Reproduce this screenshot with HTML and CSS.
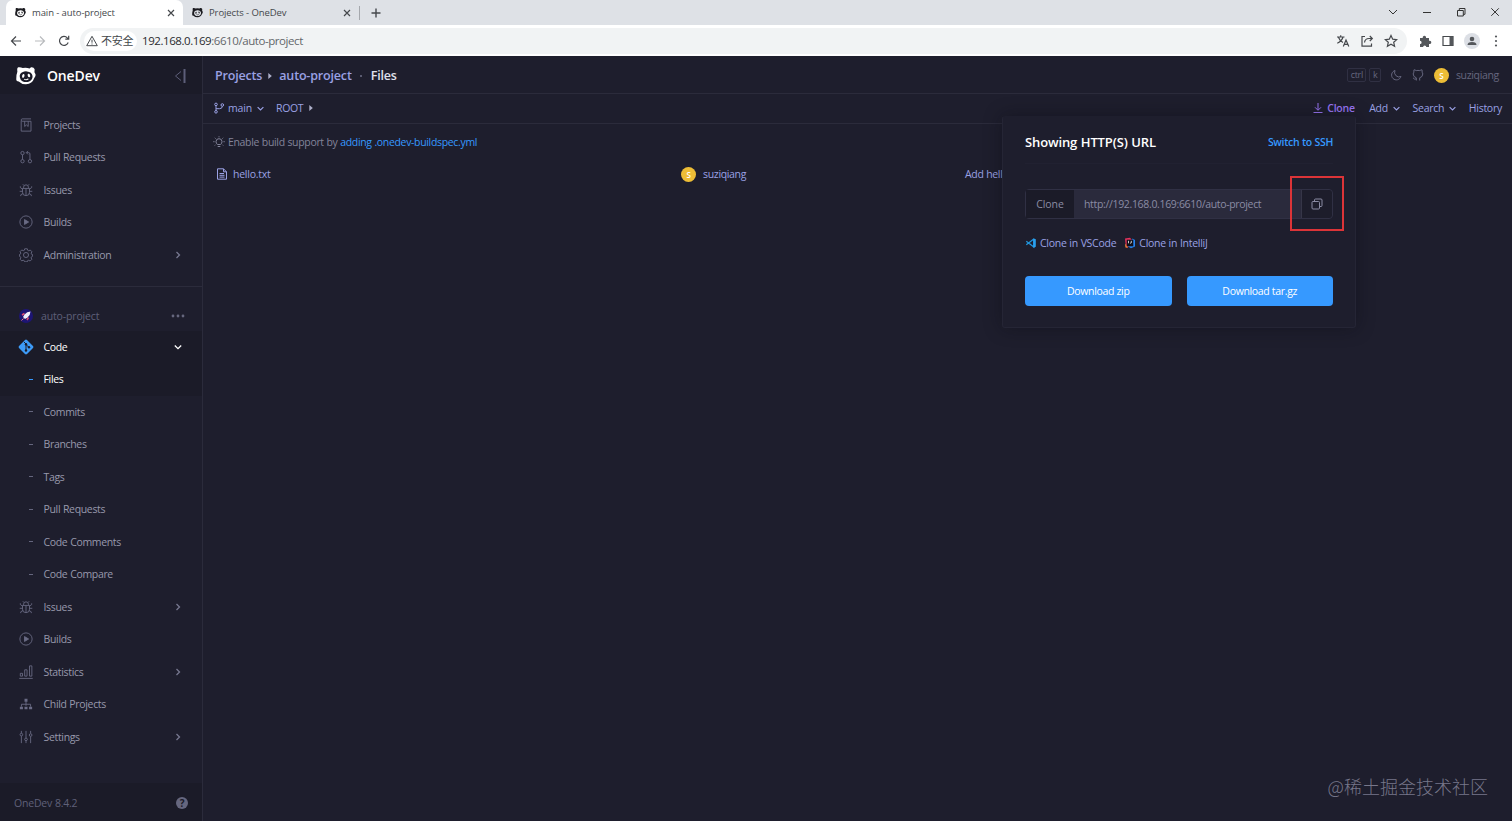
FILE: index.html
```html
<!DOCTYPE html>
<html lang="en">
<head>
  <meta charset="UTF-8">
  <title>main - auto-project</title>
  <link rel="stylesheet" href="styles.css">
</head>
<body>
  <svg class="sprite" width="0" height="0">
    <symbol id="logo" viewBox="0 0 22 20">
      <path d="M2.500 1 Q1.300 1.200 1.300 3.500 L1.500 6 Q.3 9 .3 13.500 Q0 16.500 3 16.500 Q6 19.600 11 19.500 Q18 19.200 20 13 Q22 11 21.500 8.500 L20.300 6.500 L20.500 3 Q19.500.6 16.500 1 L15 2.200 Q11 1 7.500 1.800 Q4.500.4 2.500 1Z" fill="currentColor"/>
      <path d="M4.200 12 Q3.500 8 7 6.500 Q9.500 5.200 12 5.500 Q17.500 5.800 18.200 10.500 Q18.500 14.500 14.500 16.500 Q11 17.800 7.500 16.500 Q4.500 15 4.200 12Z" class="logo-face"/>
      <ellipse cx="8" cy="10.500" rx="1.300" ry="2.100" transform="rotate(15 8 10.500)" fill="currentColor"/>
      <ellipse cx="14.200" cy="10" rx="1.300" ry="2.100" transform="rotate(-20 14.200 10)" fill="currentColor"/>
      <path d="M9 14 Q11.300 15.600 13.600 13.600" fill="none" stroke="currentColor" stroke-width="1.200"/>
    </symbol>
    <symbol id="close" viewBox="0 0 10 10"><path d="M2 2l6 6M8 2l-6 6"/></symbol>
    <symbol id="right" viewBox="0 0 10 10"><path d="M3.500 2l3 3-3 3"/></symbol>
    <symbol id="down" viewBox="0 0 10 10"><path d="M1.800 3.500L5 6.700l3.200-3.200"/></symbol>
    <symbol id="caret" viewBox="0 0 6 8"><path d="M1.300 1L4.800 4l-3.500 3z" fill="currentColor" stroke="none"/></symbol>
    <symbol id="projects" viewBox="0 0 16 16"><path d="M2.500 3.200V15h11.200V3.700H3.600C2.200 3.700 2.200 1 3.600 1h10.100M6.500 3.700v6l2-1.800 2 1.800v-6"/></symbol>
    <symbol id="pull" viewBox="0 0 16 16"><circle cx="4" cy="3.500" r="1.900"/><circle cx="4" cy="12.800" r="1.900"/><circle cx="12.500" cy="12.800" r="1.900"/><path d="M4 5.400v5.500M12.500 10.900V4.500q0-1.500-1.500-1.500H8.500M10.300 1L8.300 3l2 2"/></symbol>
    <symbol id="bug" viewBox="0 0 16 16"><path d="M4 6.200h8v4.300a4 4 0 0 1-8 0zM5.200 6V4.900a2.800 2.800 0 0 1 5.600 0V6M8 6.200v8M4 9.500H.8M12 9.500h3.200M4 7L1.500 5.200V3.800M12 7l2.500-1.800V3.800M4.500 12L2 13.500V15M11.500 12l2.500 1.500V15M5.500 2.800L4.500 1.500M10.500 2.800l1-1.300"/></symbol>
    <symbol id="play" viewBox="0 0 16 16"><circle cx="8" cy="8" r="7"/><path d="M6.300 5.200v5.600L11 8z" fill="currentColor"/></symbol>
    <symbol id="gear" viewBox="0 0 16 16"><circle cx="8" cy="8" r="2.900"/><path d="M6.500.9h3l.4 1.700 1.300.6 1.600-.9 2 2-.9 1.600.5 1.300 1.100.3v2l-1.100.5-.6 1.300.9 1.600-2 2-1.600-.9-1.300.5-.3 1.300h-3l-.5-1.300-1.300-.6-1.500.9-2-2 .9-1.600-.6-1.300-1-.4v-2l1-.4.6-1.300-.9-1.600 2-2 1.600.9 1.300-.5z"/></symbol>
    <symbol id="stats" viewBox="0 0 16 16"><path d="M.3 15.300h15.400M1.500 12.700V9.500H4v3.200zM6.500 12.700V5.500h2.700v7.200zM12 12.700V1h2.700v11.700z"/></symbol>
    <symbol id="tree" viewBox="0 0 16 16"><path d="M8 5v5M2.800 11V8.300h10.400V11"/><path d="M6.300 2h3.400v3.400H6.300zM1 11h3.500v3H1zM6.300 11h3.400v3H6.300zM11.500 11H15v3h-3.500z" fill="currentColor" stroke="none"/></symbol>
    <symbol id="sliders" viewBox="0 0 16 16"><path d="M2.700 1v2.700M2.700 7v8M8 1v8M8 12.500V15M13.300 1v3M13.300 7.500V15"/><circle cx="2.700" cy="5.300" r="1.500"/><circle cx="8" cy="10.700" r="1.500"/><circle cx="13.300" cy="5.800" r="1.500"/></symbol>
    <symbol id="branch" viewBox="0 0 12 12"><circle cx="3" cy="2.400" r="1.300"/><circle cx="3" cy="9.800" r="1.300"/><circle cx="9.300" cy="3" r="1.300"/><path d="M3 3.700v4.800M9.300 4.300Q9.300 6.700 6.500 6.700H3"/></symbol>
  </svg>

  <div class="browser">
    <div class="tabs">
      <div class="tab active">
        <svg class="favicon"><use href="#logo"/></svg>
        <span>main - auto-project</span>
        <svg class="tab-close"><use href="#close"/></svg>
      </div>
      <div class="tab">
        <svg class="favicon"><use href="#logo"/></svg>
        <span>Projects - OneDev</span>
        <svg class="tab-close"><use href="#close"/></svg>
      </div>
      <svg class="new-tab" viewBox="0 0 12 12"><path d="M6 1.500v9M1.500 6h9"/></svg>
      <div class="window-buttons">
        <svg viewBox="0 0 12 12"><path d="M2 4l4 4 4-4"/></svg>
        <svg viewBox="0 0 12 12"><path d="M2 6.500h8"/></svg>
        <svg viewBox="0 0 12 12"><path d="M2.500 4.500h5.800v5.500H2.500zM4.300 4.500V2.500H10v5.800H8.300"/></svg>
        <svg viewBox="0 0 12 12"><path d="M2.300 2.300l7.500 7.500M9.800 2.300L2.300 9.800"/></svg>
      </div>
    </div>
    <div class="toolbar">
      <div class="nav-buttons">
        <svg viewBox="0 0 12 12"><path d="M11 6H1.500M6 1.500L1.500 6 6 10.500"/></svg>
        <svg class="disabled" viewBox="0 0 12 12"><path d="M1 6h9.500M6 1.500L10.500 6 6 10.500"/></svg>
        <svg viewBox="0 0 12 12"><path d="M10.200 7.500A4.500 4.500 0 1 1 9.300 2.800L10.500 4M10.700.8v3.400H7.300"/></svg>
      </div>
      <div class="address">
        <div class="insecure">
          <svg viewBox="0 0 12 12"><path d="M6 1.300L11.300 10.700H.7zM6 4.700v3M6 8.500v1"/></svg>
          <span>不安全</span>
        </div>
        <div class="url">192.168.0.169<span>:6610/auto-project</span></div>
        <div class="address-icons">
          <svg viewBox="0 0 14 14"><path d="M1 3h7.500M4.700 1.300V3M2.300 3q1.500 4 4.700 5.500M7 3Q6 7 1.300 9.300M7.300 12.500L10 6l2.800 6.500M8.300 10.300h3.500"/></svg>
          <svg viewBox="0 0 14 14"><path d="M5 2.500H2v9.700h9.500V9.500M4.500 8.500Q5 4.500 9 4.500h3M9.800 2l2.500 2.500L9.800 7"/></svg>
          <svg viewBox="0 0 14 14"><path d="M7 1.500l1.700 3.700 4 .4-3 2.700.9 4L7 10.200l-3.600 2.100.9-4-3-2.700 4-.4z"/></svg>
        </div>
      </div>
      <div class="ext-icons">
        <svg viewBox="0 0 14 14"><path class="solid" d="M2 4h2.800a1.700 1.700 0 1 1 3.200 0H11v2.800a1.700 1.700 0 1 1 0 3.200v3H8.300a1.600 1.600 0 1 0-3.200 0H2v-3a1.600 1.600 0 1 0 0-3.200z"/></svg>
        <svg viewBox="0 0 14 14"><path d="M2 2.500h10v9H2z"/><path class="solid" d="M8.500 2.500H12v9H8.500z"/></svg>
        <svg class="profile" viewBox="0 0 16 16"><circle class="halo" cx="8" cy="8" r="8"/><circle class="solid" cx="8" cy="6" r="2.300"/><path class="solid" d="M3.500 12q0-3 4.500-3t4.500 3z"/></svg>
        <svg viewBox="0 0 14 14"><circle class="solid" cx="7" cy="2.500" r="1.100"/><circle class="solid" cx="7" cy="7" r="1.100"/><circle class="solid" cx="7" cy="11.500" r="1.100"/></svg>
      </div>
    </div>
  </div>

  <div class="app">
    <aside class="sidebar">
      <div class="brand">
        <svg class="brand-logo"><use href="#logo"/></svg>
        <span>OneDev</span>
        <svg class="collapse" viewBox="0 0 12 16"><path d="M7 3.500L1.500 8 7 12.500"/><path class="bar" d="M10.500 1v14"/></svg>
      </div>
      <nav class="menu">
        <a class="item"><svg class="icon"><use href="#projects"/></svg>Projects</a>
        <a class="item"><svg class="icon"><use href="#pull"/></svg>Pull Requests</a>
        <a class="item"><svg class="icon"><use href="#bug"/></svg>Issues</a>
        <a class="item"><svg class="icon"><use href="#play"/></svg>Builds</a>
        <a class="item"><svg class="icon"><use href="#gear"/></svg>Administration<svg class="arrow"><use href="#right"/></svg></a>
      </nav>
      <nav class="menu project-menu">
        <div class="project">
          <svg class="avatar" viewBox="0 0 16 16"><circle cx="8" cy="8" r="7" fill="#1d1573"/><path d="M4 7l2.500-1.500M9 12l1.500-2.500" stroke="#e14c71" stroke-width="1.500"/><path d="M12.500 3.500Q9 3.500 6.500 6.500L5 9l2 2 2.500-1.500q3-2.500 3-6z" fill="#f1edfa"/><path d="M3.500 12.500l2-2" stroke="#f07986"/></svg>
          <span>auto-project</span>
          <svg class="dots" viewBox="0 0 14 4"><circle cx="2" cy="2" r="1.400"/><circle cx="7" cy="2" r="1.400"/><circle cx="12" cy="2" r="1.400"/></svg>
        </div>
        <a class="item open"><svg class="icon git" viewBox="0 0 16 16"><path class="diamond" d="M8 .6Q8.500.6 9 1.100L15 7q.9 1 0 2l-6 6q-1 .9-2 0L1 9Q.1 8 1 7l6-5.900Q7.500.6 8 .6z"/><path d="M6 3l2 2v6.500M8 5.500l3 3"/><circle class="node" cx="8" cy="5.300" r="1.200"/><circle class="node" cx="8" cy="11.500" r="1.200"/><circle class="node" cx="11" cy="8.300" r="1.200"/></svg>Code<svg class="arrow"><use href="#down"/></svg></a>
        <a class="item sub current">Files</a>
        <a class="item sub">Commits</a>
        <a class="item sub">Branches</a>
        <a class="item sub">Tags</a>
        <a class="item sub">Pull Requests</a>
        <a class="item sub">Code Comments</a>
        <a class="item sub">Code Compare</a>
        <a class="item"><svg class="icon"><use href="#bug"/></svg>Issues<svg class="arrow"><use href="#right"/></svg></a>
        <a class="item"><svg class="icon"><use href="#play"/></svg>Builds</a>
        <a class="item"><svg class="icon"><use href="#stats"/></svg>Statistics<svg class="arrow"><use href="#right"/></svg></a>
        <a class="item"><svg class="icon"><use href="#tree"/></svg>Child Projects</a>
        <a class="item"><svg class="icon"><use href="#sliders"/></svg>Settings<svg class="arrow"><use href="#right"/></svg></a>
      </nav>
      <div class="version"><span>OneDev 8.4.2</span><span class="help">?</span></div>
    </aside>

    <main class="main">
      <header class="topbar">
        <div class="breadcrumb">
          <a>Projects</a><svg class="caret"><use href="#caret"/></svg><a>auto-project</a><i class="dot"></i><b>Files</b>
        </div>
        <div class="user-tools">
          <kbd>ctrl</kbd><kbd>k</kbd>
          <svg class="tool moon" viewBox="0 0 12 12"><path d="M5 1.500A4.800 4.800 0 1 0 11 7.500 4.500 4.500 0 0 1 5 1.500z"/></svg>
          <svg class="tool" viewBox="0 0 12 12"><path d="M4.300 11.500V8.800Q1.200 8 1.200 5 1.200 4 2 3.100 1.600 2 2 .8 3 .8 4.200 1.600 6 1.200 7.800 1.600 9 .8 10 .8 10.400 2 10 3.100q.8.900.8 1.900 0 3-3.100 3.800v2.700M4.300 10Q2.500 10.800 1 8.800"/></svg>
          <span class="face">S</span>
          <span>suziqiang</span>
        </div>
      </header>

      <div class="filebar">
        <a class="revision"><svg class="small"><use href="#branch"/></svg>main<svg class="chev"><use href="#down"/></svg></a>
        <a class="root">ROOT<svg class="caret"><use href="#caret"/></svg></a>
        <div class="actions">
          <a class="clone-link"><svg class="small" viewBox="0 0 12 12"><path d="M6 1v7M3 5.300l3 3 3-3M1.500 10.500h9"/></svg>Clone</a>
          <a>Add<svg class="chev"><use href="#down"/></svg></a>
          <a>Search<svg class="chev"><use href="#down"/></svg></a>
          <a>History</a>
        </div>
      </div>

      <div class="tip">
        <svg viewBox="0 0 12 12"><path d="M4.500 8.500Q3 7.300 3 5.700a3 3 0 0 1 6 0Q9 7.300 7.500 8.500zM4.700 10.500h2.600M6 .3v1M1.800 1.800l.8.800M10.200 1.800l-.8.800M.3 5.700h1.200M10.500 5.700h1.200M1.800 9.500l.8-.8M10.200 9.500l-.8-.8"/></svg>
        <span>Enable build support by <a>adding .onedev-buildspec.yml</a></span>
      </div>

      <div class="file-row">
        <a class="file"><svg viewBox="0 0 12 12"><path d="M1.500.8h6l3 3v7.400h-9zM7.500.8v3h3M3.500 5.500h4.500M3.500 7.300h5M3.500 9.100h5"/></svg>hello.txt</a>
        <a class="author"><span class="face">S</span>suziqiang</a>
        <a class="message">Add hello.txt</a>
      </div>

      <section class="clone-panel">
        <div class="panel-head"><h2>Showing HTTP(S) URL</h2><a>Switch to SSH</a></div>
        <div class="url-group">
          <span class="label">Clone</span>
          <span class="value">http://192.168.0.169:6610/auto-project</span>
          <button class="copy"><svg viewBox="0 0 12 12"><path d="M1 4.500Q1 3.500 2 3.500h5.500q1 0 1 1V10q0 1-1 1H2q-1 0-1-1zM3.500 3.500V2q0-1 1-1H10q1 0 1 1v5.500q0 1-1 1H8.500"/></svg></button>
        </div>
        <div class="ide-links">
          <a><svg viewBox="0 0 12 12"><path d="M8.800 2v8L1.300 4.300M8.800 2L1.300 7.700" stroke="#2196dd" stroke-width="1.300"/><path d="M8.300 1.300l2.500 1v7.400l-2.500 1z" fill="#2aa0ee"/></svg>Clone in VSCode</a>
          <a><svg viewBox="0 0 12 12"><path d="M1 1.500l5-.7L8 3 4 10.500H2z" fill="#e3335d"/><path d="M1 6.500l3 4H1.500z" fill="#f28b30"/><path d="M8.500 1.500l2.500 1.500v6.500L7 11.300 4 9.500z" fill="#2583ed"/><path d="M2.700 2.700h6.600v6.600H2.700z" fill="#10101a"/><path d="M4.500 3.800v2.500M7.300 3.800v2L6 6.300" stroke="#ddd" stroke-width=".9"/></svg>Clone in IntelliJ</a>
        </div>
        <div class="downloads"><button>Download zip</button><button>Download tar.gz</button></div>
        <div class="marker"></div>
      </section>

      <div class="watermark">@稀土掘金技术社区</div>
    </main>
  </div>
</body>
</html>
```
FILE: styles.css
```css
* {
  box-sizing: border-box;
  margin: 0;
  padding: 0;
}

body {
  width: 1512px;
  height: 821px;
  overflow: hidden;
  background: #1e1e2d;
  color: #9899ac;
  font: 10.5px/16px "Open Sans", "Noto Sans CJK SC", sans-serif;
  letter-spacing: -0.33px;
  word-spacing: 0.3px;
}

svg {
  flex: none;
  fill: none;
  stroke: currentColor;
}

.sprite {
  display: none;
}

.logo-face {
  fill: var(--face, #fff);
}

#logo {
  stroke: none;
}

/* browser window */
.browser {
  height: 56px;
  color: #45484c;
}

.tabs {
  display: flex;
  align-items: center;
  height: 25px;
  padding-left: 6px;
  background: #dee1e6;
  font-size: 9.5px;
  letter-spacing: -0.1px;
  word-spacing: 0;
}

.tab {
  display: flex;
  align-items: center;
  width: 177px;
  height: 25px;
  padding: 0 7px 0 9px;
}

.tab.active {
  border-radius: 7px 7px 0 0;
  background: #fff;
}

.tab:not(.active) {
  --face: #dee1e6;
  border-right: 1px solid #a5a8ad;
  height: 14px;
}

.favicon {
  width: 11px;
  height: 11px;
  margin-right: 6px;
  color: #1b1b20;
  stroke: none;
}

.tab-close {
  width: 10px;
  height: 10px;
  margin-left: auto;
  stroke-width: 1.2;
}

.new-tab {
  width: 12px;
  height: 12px;
  margin-left: 10px;
  stroke-width: 1.4;
}

.window-buttons {
  display: flex;
  gap: 22px;
  margin-left: auto;
  padding-right: 11px;
}

.window-buttons svg {
  width: 12px;
  height: 12px;
  margin-top: -2px;
  stroke: #333;
}

.toolbar {
  display: flex;
  align-items: center;
  height: 31px;
  padding-left: 10px;
  background: #fff;
}

.nav-buttons {
  display: flex;
  gap: 12px;
}

.nav-buttons svg {
  width: 12px;
  height: 12px;
  stroke-width: 1.2;
}

.nav-buttons .disabled {
  color: #b9bbbe;
}

.address {
  display: flex;
  align-items: center;
  width: 1327px;
  height: 26px;
  margin-left: 10px;
  padding-left: 4px;
  border-radius: 13px;
  background: #f1f3f4;
}

.insecure {
  display: flex;
  align-items: center;
  gap: 3px;
  width: 53px;
  height: 20px;
  padding-left: 2px;
  border-radius: 10px;
  background: #fff;
  font-size: 11px;
  letter-spacing: -0.2px;
  white-space: nowrap;
}

.insecure svg {
  width: 12px;
  height: 12px;
}

.url {
  margin-left: 5px;
  color: #292b2e;
  font-size: 11.5px;
  letter-spacing: -0.43px;
}

.url span {
  color: #63666a;
}

.address-icons {
  display: flex;
  gap: 10px;
  margin-left: auto;
  padding-right: 9px;
}

.address-icons svg,
.ext-icons svg {
  width: 14px;
  height: 14px;
  stroke-width: 1.2;
}

.ext-icons {
  display: flex;
  align-items: center;
  gap: 9px;
  margin-left: 11px;
}

.ext-icons .profile {
  width: 16px;
  height: 16px;
}

.solid {
  fill: #54575b;
  stroke: none;
}

.halo {
  fill: #dcdfe5;
  stroke: none;
}

/* sidebar */
.app {
  display: flex;
  height: 765px;
}

.sidebar {
  display: flex;
  flex-direction: column;
  width: 203px;
  border-right: 1px solid #2b2b3b;
}

.brand {
  display: flex;
  align-items: center;
  height: 38px;
  padding: 1px 16px 0;
  background: #1b1b28;
  color: #fff;
  font-size: 14px;
  font-weight: 600;
  letter-spacing: -0.15px;
}

.brand-logo {
  --face: #1b1b28;
  width: 20px;
  height: 19px;
  margin-right: 11px;
  stroke: none;
}

.collapse {
  width: 12px;
  height: 16px;
  margin-left: auto;
  color: #5d5e79;
}

.collapse .bar {
  stroke-width: 2;
}

.menu {
  padding: 14.5px 0 15px;
  border-bottom: 1px solid #2b2b3b;
}

.project-menu {
  padding-top: 13.5px;
  border: 0;
}

.item {
  display: flex;
  align-items: center;
  height: 32.5px;
  padding: 0 19px;
}

.icon {
  width: 14px;
  height: 14px;
  margin-right: 10.5px;
  color: #6a6b85;
}

.arrow {
  width: 10px;
  height: 10px;
  margin-left: auto;
  color: #777890;
  stroke-width: 1.3;
}

.project {
  display: flex;
  align-items: center;
  height: 30px;
  padding: 0 17px 0 18px;
  color: #5f6079;
  letter-spacing: -0.15px;
}

.avatar {
  width: 16px;
  height: 16px;
  margin-right: 7px;
  stroke: none;
}

.dots {
  width: 14px;
  height: 4px;
  margin-left: auto;
  fill: #66677e;
  stroke: none;
}

.open,
.current {
  background: #1b1b28;
  color: #fff;
}

.open .arrow {
  color: #fff;
}

.icon.git {
  width: 16px;
  height: 16px;
  margin: 0 9.5px 0 -1px;
  color: #1b1b28;
}

.diamond {
  fill: #3d9bf8;
  stroke: none;
}

.node {
  fill: #1b1b28;
  stroke: none;
}

.sub::before {
  content: "";
  width: 4px;
  height: 1px;
  margin: 0 10.5px 0 10px;
  background: #65667e;
}

.current::before {
  background: #3699ff;
}

.version {
  display: flex;
  align-items: center;
  justify-content: space-between;
  height: 38px;
  margin-top: auto;
  padding: 1px 14px 0;
  background: #1b1b28;
  color: #5f6079;
  letter-spacing: -0.2px;
}

.help {
  width: 12px;
  height: 12px;
  border-radius: 50%;
  background: #66677f;
  color: #1b1b28;
  font-size: 10px;
  font-weight: 700;
  line-height: 12px;
  text-align: center;
}

/* content */
.main {
  position: relative;
  flex: 1;
  color: #9aa1e4;
}

.topbar {
  display: flex;
  align-items: center;
  justify-content: space-between;
  height: 38px;
  padding: 1px 13px 0 12px;
  border-bottom: 1px solid #2b2b3b;
}

.breadcrumb {
  display: flex;
  align-items: center;
  padding-top: 1px;
  font-size: 12.5px;
  font-weight: 600;
  letter-spacing: -0.17px;
}

.breadcrumb b {
  color: #e0e1ee;
  font-weight: 600;
}

.caret {
  width: 6px;
  height: 8px;
  margin: 0 6px 0 5px;
  color: #aeb0ca;
}

.dot {
  width: 2px;
  height: 2px;
  margin: 0 8.5px;
  background: #595a70;
}

.user-tools {
  display: flex;
  align-items: center;
  color: #66677f;
}

kbd {
  height: 14px;
  margin-right: 3px;
  padding: 0 2.5px;
  border: 1px solid #303043;
  border-radius: 2px;
  font: 9px/12px "Open Sans", sans-serif;
  letter-spacing: -0.3px;
}

.tool {
  width: 12px;
  height: 12px;
  margin-right: 10px;
}

.moon {
  margin-left: 6px;
}

.face {
  width: 15px;
  height: 15px;
  margin-right: 7px;
  border-radius: 50%;
  background: #edbd36;
  color: #fff;
  font-size: 8px;
  font-weight: 600;
  line-height: 15px;
  text-align: center;
}

.filebar {
  display: flex;
  align-items: center;
  height: 30px;
  padding: 0 10px 1px;
  border-bottom: 1px solid #2b2b3b;
}

.filebar a {
  display: flex;
  align-items: center;
}

.revision {
  letter-spacing: -0.15px;
}

.small {
  width: 12px;
  height: 12px;
  margin-right: 3px;
}

.chev {
  width: 9px;
  height: 9px;
  margin-left: 4px;
  stroke-width: 1.3;
}

.root {
  margin-left: 11px;
}

.actions {
  display: flex;
  gap: 11.5px;
  margin-left: auto;
  letter-spacing: -0.25px;
}

.filebar .clone-link {
  margin-right: 3px;
  color: #9a76f6;
  font-weight: 600;
}

.tip {
  display: flex;
  align-items: center;
  gap: 3px;
  height: 35px;
  padding-left: 10px;
  color: #83849a;
}

.tip svg {
  width: 12px;
  height: 12px;
}

.tip a,
.panel-head a {
  color: #3699ff;
}

.file-row {
  display: grid;
  grid-template-columns: 465px 284px 1fr;
  align-items: center;
  height: 30px;
  padding-left: 13px;
}

.file,
.author {
  display: flex;
  align-items: center;
}

.file {
  letter-spacing: -0.25px;
}

.file svg {
  width: 12px;
  height: 12px;
  margin-right: 5px;
}

.clone-panel {
  position: absolute;
  top: 60px;
  left: 799px;
  width: 354px;
  height: 212px;
  padding: 0 22px;
  border: 1px solid #252535;
  border-top-color: #1e1e2d;
  border-radius: 3px;
  background: #1e1e2d;
  box-shadow: 0 0 18px rgba(10, 10, 18, 0.4);
}

.panel-head {
  display: flex;
  align-items: center;
  justify-content: space-between;
  height: 47px;
  padding-top: 4px;
  border-bottom: 1px solid #212131;
  font-weight: 600;
}

.panel-head h2 {
  color: #fff;
  font-size: 13px;
  font-weight: 600;
  letter-spacing: -0.12px;
}

.url-group {
  display: flex;
  height: 30px;
  margin-top: 25px;
  border: 1px solid #303044;
  border-radius: 4px;
  line-height: 29px;
  color: #8b8ca4;
}

.label {
  width: 48px;
  background: #1b1b28;
  letter-spacing: -0.1px;
  text-align: center;
}

.value {
  flex: 1;
  padding-left: 10px;
  background: #2a2a3c;
}

.copy {
  display: flex;
  align-items: center;
  justify-content: center;
  width: 31px;
  border: 0;
  border-left: 1px solid #363648;
  border-radius: 0 4px 4px 0;
  background: #1d1d2b;
  color: #8b8ca4;
}

.copy svg {
  width: 12px;
  height: 12px;
}

.ide-links {
  display: flex;
  gap: 8px;
  height: 18px;
  margin-top: 14.5px;
}

.ide-links a {
  display: flex;
  align-items: center;
  letter-spacing: -0.27px;
}

.ide-links svg {
  width: 12px;
  height: 12px;
  margin-right: 3px;
  stroke: none;
}

.downloads {
  display: flex;
  gap: 15px;
  margin-top: 24.5px;
}

.downloads button {
  flex: 1;
  height: 30px;
  border: 0;
  border-radius: 4px;
  background: #3699ff;
  color: #fff;
  font: inherit;
  letter-spacing: inherit;
}

/* highlight around the copy button */
.marker {
  position: absolute;
  top: 59px;
  right: 11px;
  width: 54px;
  height: 55px;
  border: 2px solid #dc3438;
}

.watermark {
  position: absolute;
  right: 24px;
  bottom: 22px;
  color: #77778a;
  font: 300 18px/26px "Noto Sans CJK SC", sans-serif;
  letter-spacing: 0;
}
```
